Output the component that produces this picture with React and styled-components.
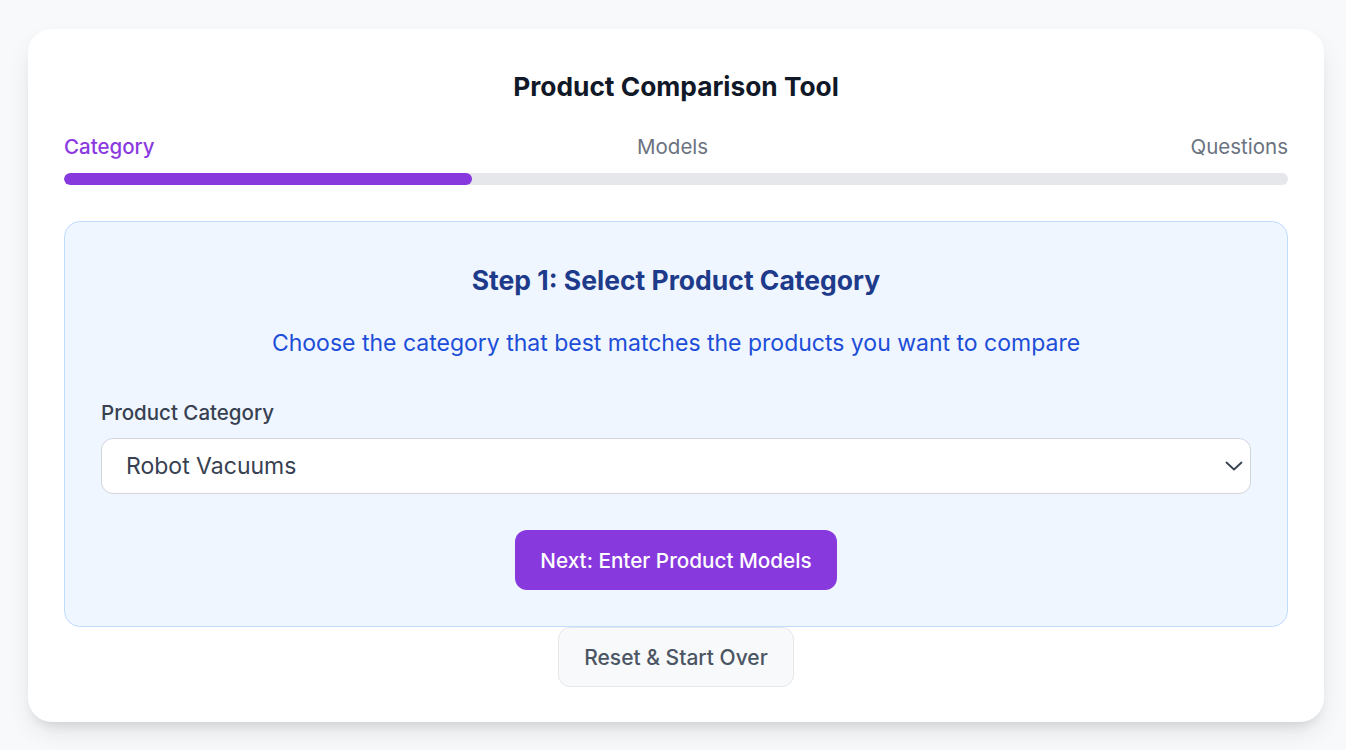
import React from "react";
import styled, { createGlobalStyle } from "styled-components";

const Global = createGlobalStyle`
  * { box-sizing: border-box; }
  html, body { margin: 0; padding: 0; }
  body {
    background: #f8f9fb;
    font-family: Inter, "Noto Sans", "Liberation Sans", sans-serif;
    -webkit-font-smoothing: antialiased;
  }
`;

const Page = styled.div`
  padding: 29px 22px 28px 28px;
  min-height: 750px;
`;

const Card = styled.div`
  background: #ffffff;
  border-radius: 24px;
  box-shadow: 0 12px 28px -6px rgba(0, 0, 0, 0.12), 0 8px 12px -6px rgba(0, 0, 0, 0.1);
  padding: 36px 36px 35px;
  display: flex;
  flex-direction: column;
  align-items: stretch;
`;

const Title = styled.h1`
  margin: 0;
  text-align: center;
  font-size: 26.3px;
  line-height: 44px;
  font-weight: 700;
  color: #111827;
`;

const Steps = styled.div`
  display: flex;
  justify-content: space-between;
  margin-top: 24px;
`;

const StepLabel = styled.span`
  font-size: 20.5px;
  line-height: 28px;
  font-weight: ${(p) => (p.$active ? 500 : 400)};
  color: ${(p) => (p.$active ? "#8b3ae0" : "#6b7280")};
`;

const Track = styled.div`
  margin-top: 12px;
  height: 12px;
  border-radius: 999px;
  background: #e5e7eb;
  overflow: hidden;
`;

const Fill = styled.div`
  height: 100%;
  border-radius: 999px;
  background: #8839de;
`;

const Panel = styled.div`
  margin-top: 36px;
  background: #eff6ff;
  border: 1px solid #bfdbfe;
  border-radius: 16px;
  padding: 36px 36px 36px;
  display: flex;
  flex-direction: column;
`;

const StepHeading = styled.h2`
  margin: 0;
  text-align: center;
  font-size: 26.5px;
  line-height: 44px;
  font-weight: 700;
  color: #1e3a8a;
`;

const Subtitle = styled.p`
  margin: 25px 0 0;
  text-align: center;
  font-size: 23px;
  line-height: 32px;
  color: #1d4ed8;
`;

const Label = styled.label`
  margin-top: 40px;
  font-size: 20.5px;
  line-height: 28px;
  font-weight: 500;
  color: #374151;
`;

const SelectWrap = styled.div`
  margin-top: 11px;
  height: 56px;
  border: 1px solid #d1d5db;
  border-radius: 12px;
  background: #ffffff;
  display: flex;
  align-items: center;
  justify-content: space-between;
  padding: 0 7px 0 24px;
`;

const SelectValue = styled.span`
  font-size: 23px;
  color: #374151;
`;

const Chevron = styled.svg`
  width: 18px;
  height: 10px;
  color: #374151;
`;

const ButtonRow = styled.div`
  display: flex;
  justify-content: center;
  margin-top: 36px;
`;

const PrimaryButton = styled.button`
  height: 60px;
  padding: 0 25px;
  border: none;
  border-radius: 12px;
  background: #8839de;
  color: #ffffff;
  font-family: inherit;
  font-size: 20.7px;
  font-weight: 500;
  cursor: pointer;
`;

const SecondaryButton = styled.button`
  align-self: center;
  height: 60px;
  padding: 0 25px;
  border: 1px solid #e5e7eb;
  border-radius: 12px;
  background: #f8f9fa;
  color: #4b5563;
  font-family: inherit;
  font-size: 21px;
  font-weight: 500;
  cursor: pointer;
`;

const steps = ["Category", "Models", "Questions"];

export default function App() {
  return (
    <>
      <Global />
      <Page>
        <Card>
          <Title>Product Comparison Tool</Title>
          <Steps>
            {steps.map((s, i) => (
              <StepLabel key={s} $active={i === 0}>
                {s}
              </StepLabel>
            ))}
          </Steps>
          <Track>
            <Fill style={{ width: `${(1 / 3) * 100}%` }} />
          </Track>
          <Panel>
            <StepHeading>Step 1: Select Product Category</StepHeading>
            <Subtitle>Choose the category that best matches the products you want to compare</Subtitle>
            <Label>Product Category</Label>
            <SelectWrap>
              <SelectValue>Robot Vacuums</SelectValue>
              <Chevron viewBox="0 0 18 10" fill="none" stroke="currentColor" strokeWidth="1.8" strokeLinecap="round" strokeLinejoin="round">
                <path d="M1.5 1.5L9 8.5L16.5 1.5" />
              </Chevron>
            </SelectWrap>
            <ButtonRow>
              <PrimaryButton>Next: Enter Product Models</PrimaryButton>
            </ButtonRow>
          </Panel>
          <SecondaryButton>Reset &amp; Start Over</SecondaryButton>
        </Card>
      </Page>
    </>
  );
}
